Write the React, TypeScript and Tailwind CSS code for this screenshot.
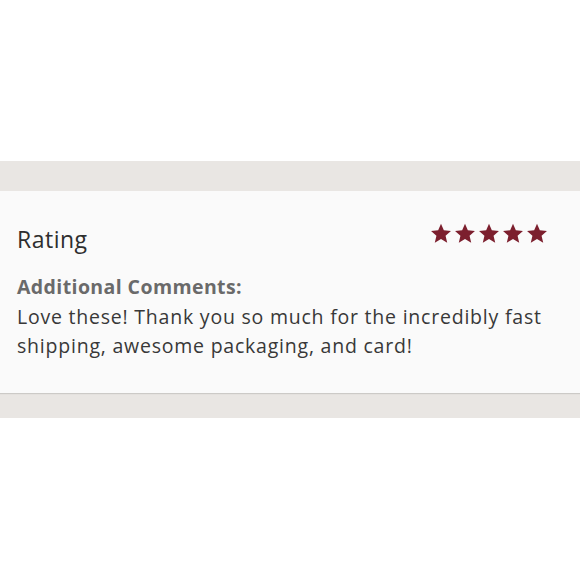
export default function App() {
  return (
    <div className="w-[580px] h-[580px] bg-white flex flex-col" style={{ fontFamily: '"Open Sans", "Liberation Sans", sans-serif' }}>
      <div className="h-[161px] bg-white" />
      <div className="h-[30px] bg-[#e9e6e3]" />
      <div className="h-[202px] bg-[#fafafa] px-[17px] pt-[32px] shadow-[0_1px_1px_rgba(0,0,0,0.12)] relative z-10">
        <div className="flex items-start justify-between">
          <h2 className="text-[23px] leading-[28px] tracking-[0.5px] text-[#2e2e2e] mt-[2px]">Rating</h2>
          <div className="flex gap-[2px] mr-[15px]">
            {[0, 1, 2, 3, 4].map((i) => (
              <svg key={i} width="22" height="21" viewBox="0 0 24 23">
                <path
                  d="M12 0.8l3.1 7.2 7.8 0.7-5.9 5.2 1.8 7.7L12 17.5l-6.8 4.1 1.8-7.7L1.1 8.7l7.8-0.7z"
                  fill="#7c1f2e"
                />
              </svg>
            ))}
          </div>
        </div>
        <p className="mt-[21px] text-[19.5px] leading-[26px] tracking-[0.4px] font-bold text-[#6a6a6a]">Additional Comments:</p>
        <p className="text-[19.5px] leading-[29px] tracking-[0.78px] text-[#383838] mt-[2px]">
          Love these! Thank you so much for the incredibly fast shipping, awesome packaging, and card!
        </p>
      </div>
      <div className="h-[25px] bg-[#e9e6e3]" />
      <div className="flex-1 bg-white" />
    </div>
  );
}
